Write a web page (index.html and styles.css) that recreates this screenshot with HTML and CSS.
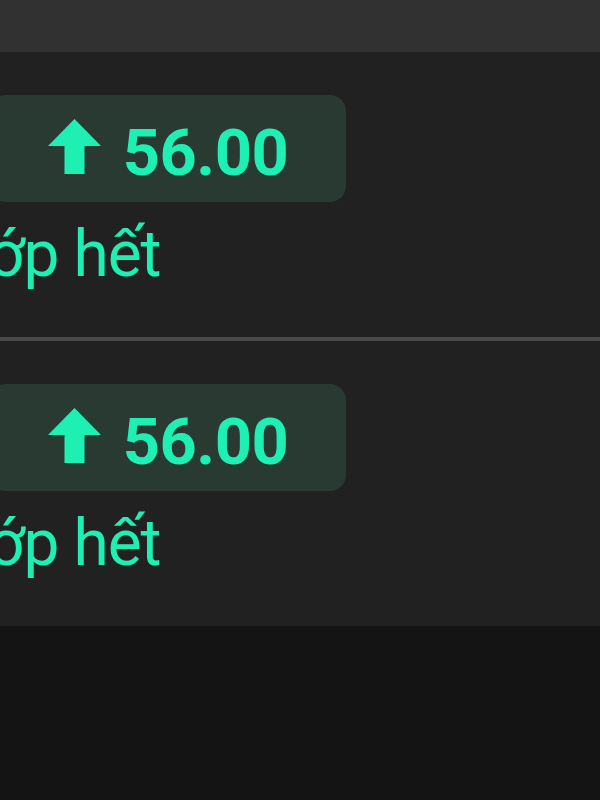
FILE: index.html
```html
<!DOCTYPE html>
<html lang="vi">
<head>
  <meta charset="UTF-8" />
  <meta name="viewport" content="width=device-width, initial-scale=1.0"/>
  <title>Bảng điểm</title>
  <link rel="stylesheet" href="styles.css">
</head>
<body>
  <div class="top-bar"></div>

  <div class="list">
    <div class="row">
      <div class="score-badge">
        <svg class="arrow-up" width="53" height="55" viewBox="0 0 53 55">
          <polygon points="26.5,0 53,27 36.5,27 36.5,55 16.5,55 16.5,27 0,27" />
        </svg>
        <span class="score">56.00</span>
      </div>
      <div class="status">ớp hết</div>
    </div>

    <div class="divider"></div>

    <div class="row">
      <div class="score-badge">
        <svg class="arrow-up" width="53" height="55" viewBox="0 0 53 55">
          <polygon points="26.5,0 53,27 36.5,27 36.5,55 16.5,55 16.5,27 0,27" />
        </svg>
        <span class="score">56.00</span>
      </div>
      <div class="status">ớp hết</div>
    </div>
  </div>

  <div class="footer"></div>
</body>
</html>
```

FILE: styles.css
```css
html, body {
  margin: 0;
  padding: 0;
  height: 100%;
  overflow: hidden;
}
body {
  font-family: Roboto, "Noto Sans", Arial, sans-serif;
  background-color: #141414;
  color: #1ef0b4;
}
.top-bar {
  height: 52px;
  background-color: #313131;
}
.list {
  background-color: #212121;
}
.row {
  padding: 43px 0 45px;
}
.divider {
  height: 4px;
  background-color: #4a4a4a;
}
.score-badge {
  display: flex;
  align-items: center;
  justify-content: center;
  gap: 22px;
  width: 356px;
  height: 107px;
  margin-left: -10px;
  border-radius: 16px;
  background-color: #293a32;
}
.arrow-up {
  display: block;
  fill: #1ef0b4;
  margin-top: -4px;
}
.score {
  font-size: 65px;
  font-weight: bold;
  line-height: 1;
  letter-spacing: -0.5px;
  margin-top: 10px;
}
.status {
  margin-top: 16px;
  margin-left: -12px;
  font-size: 64px;
  line-height: 74px;
  letter-spacing: -1px;
  white-space: nowrap;
}
.footer {
  height: 200px;
}
```
